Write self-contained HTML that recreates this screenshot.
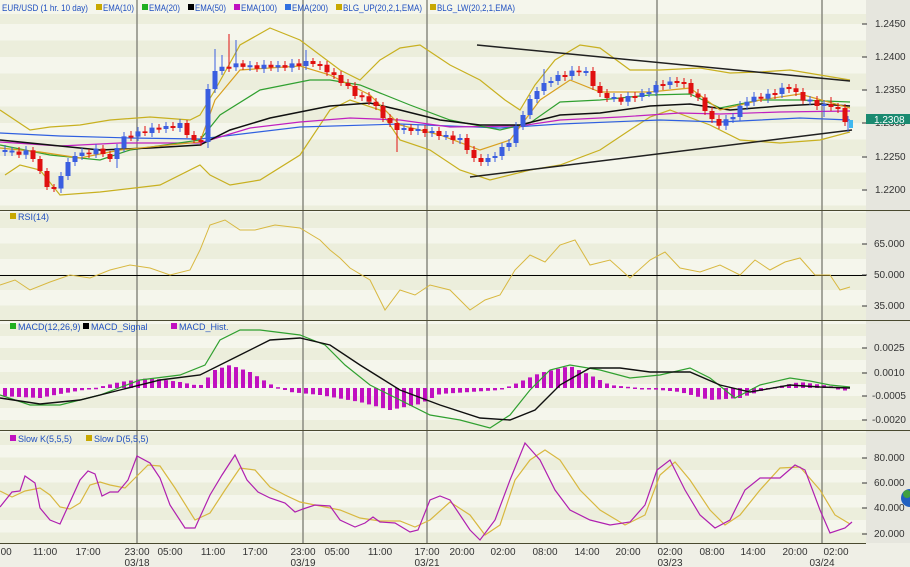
<!DOCTYPE html>
<html><head><meta charset="utf-8"><style>
html,body{margin:0;padding:0;background:#f4f5ea;}
svg{display:block;font-family:"Liberation Sans",sans-serif;}
</style></head><body>
<svg id="s" width="910" height="567" viewBox="0 0 910 567" xmlns="http://www.w3.org/2000/svg">
<rect width="910" height="567" fill="#f5f6ec"/>
<g id="bands"></g>
<rect x="866" y="0" width="44" height="543" fill="#e6e6de"/>
<rect x="0" y="543" width="910" height="24" fill="#efefe6"/>
<g stroke="#8a8a80" stroke-width="1.5">
<line x1="137" y1="0" x2="137" y2="543"/><line x1="303" y1="0" x2="303" y2="543"/>
<line x1="427" y1="0" x2="427" y2="543"/><line x1="657" y1="0" x2="657" y2="543"/>
<line x1="822" y1="0" x2="822" y2="543"/>
</g>
<g stroke="#4a4a30" stroke-width="1">
<line x1="0" y1="210.5" x2="910" y2="210.5"/><line x1="0" y1="320.5" x2="910" y2="320.5"/>
<line x1="0" y1="430.5" x2="910" y2="430.5"/><line x1="0" y1="543.5" x2="866" y2="543.5"/>
</g>
<g fill="none" stroke-width="1.2">
<polyline stroke="#c8b020" points="0,110 15,120 30,130 50,127 80,125 110,120 150,117 190,120 200,115 215,90 240,45 270,28 300,40 320,55 340,70 360,80 380,60 400,48 420,45 450,65 480,80 505,100 520,110 535,85 555,60 580,45 600,48 630,70 660,70 700,68 730,73 760,72 790,70 820,75 850,80"/>
<polyline stroke="#c8b020" points="5,175 20,165 40,170 60,195 100,192 160,185 200,165 210,175 230,185 260,180 300,155 330,110 350,100 380,110 400,140 430,150 460,170 490,180 530,170 560,165 600,150 630,130 650,117 670,110 710,125 740,140 780,143 820,140 850,132"/>
<polyline stroke="#3060e0" points="0,133 60,136 130,138 200,139 300,127 400,124 500,128 560,124 660,120 720,122 800,118 850,120"/>
<polyline stroke="#c020c0" points="0,142 60,146 120,143 200,143 250,128 300,122 350,118 400,120 450,127 520,126 560,120 620,117 680,113 720,114 780,112 850,111"/>
<polyline stroke="#30a030" points="0,145 50,155 100,160 130,150 200,140 220,115 260,90 310,80 330,80 360,85 410,105 450,120 500,130 530,123 560,102 600,100 650,95 690,94 720,108 760,100 800,100 850,102"/>
<polyline stroke="#101010" stroke-width="1.5" points="0,140 50,145 100,150 150,148 200,145 230,130 270,118 300,112 330,106 370,103 400,110 440,120 480,125 520,125 560,115 600,113 650,106 690,104 730,110 780,106 820,104 850,106"/>
<polyline stroke="#d8a020" points="0,148 40,152 80,158 120,150 200,142 215,100 240,70 300,66 330,75 370,95 400,125 440,135 480,150 510,140 540,100 570,80 600,92 650,92 690,88 720,110 760,100 800,94 850,108"/>
<line x1="477" y1="45" x2="850" y2="81" stroke="#202020" stroke-width="1.5"/>
<line x1="470" y1="177" x2="852" y2="130" stroke="#202020" stroke-width="1.5"/>
</g>
<g fill="none">
<path stroke="#e01010" stroke-width="1" d="M19 147V158M33 147V162M40 156V174M47 168V190M54 184V192M89 149V158M103 145V157M110 151V162M131 131V141M145 126V136M159 124V133M173 122V131M187 120V138M194 131V143M201 136V146M229 34V72M243 60V70M257 62V72M271 61V71M285 61V71M299 59V70M313 58V67M320 61V70M327 61V76M334 68V79M341 71V86M348 79V89M355 82V99M362 92V101M369 92V105M376 98V110M383 102V122M390 114V127M397 118V152M411 124V135M425 125V137M439 127V140M453 131V144M467 134V154M474 146V162M481 154V166M565 71V81M579 66V76M593 67V90M600 82V97M607 89V102M621 94V105M635 92V102M663 80V90M677 77V87M684 78V88M691 79V97M698 89V101M705 94V115M712 107V123M719 115V129M761 93V102M775 89V99M789 84V93M796 84V96M803 88V104M817 96V110M831 97V111M838 103V113M845 104V126"/>
<path stroke="#e01010" stroke-width="5" d="M19 151.5V154.7M33 150.3V159M40 159V171M47 171V187M54 187V189M89 152.6V154.2M103 148.6V154M110 154V159M131 135.6V137.6M145 131.4V133M159 127.6V129.6M173 126V128M187 123V135M194 135V140M201 140V142M229 66.7V68.7M243 63.4V66.9M257 65.3V68.8M271 64.8V67.5M285 65.1V67.8M299 63.4V66M313 61V64M320 64V66M327 64.7V72.3M334 72.3V75M341 75V83M348 83V86M355 86V96M362 95.3V97.3M369 96.3V101.7M376 101.7V106M383 106V118M390 118V123M397 123V130M411 128V131M425 129V133M439 131V136M453 135.5V140M467 138V150M474 150V158M481 158V162M565 75V77M579 70.6V72.2M593 71V86M600 86V93M607 93V98M621 97.5V101.8M635 96V98M663 84V86M677 81V83M684 82V84M691 83V93.5M698 93.5V97.5M705 97.5V111M712 111V119M719 119V125.7M761 96.8V98.7M775 93V95M789 87V89M796 88.3V92M803 92V100.6M817 100V106M831 104V107M838 107V109M845 108V122"/>
<path stroke="#3a5ee0" stroke-width="1" d="M5 145V156M12 147V156M26 146V159M61 172V193M68 158V180M75 152V166M82 148V160M96 144V158M117 144V168M124 132V152M138 127V141M152 123V137M166 122V133M180 119V132M208 84V148M215 49V93M222 55V75M236 40V71M250 61V71M264 60V73M278 61V72M292 59V72M306 50V70M404 124V134M418 125V135M432 127V137M446 131V140M460 134V144M488 154V166M495 152V162M502 143V160M509 139V151M516 122V147M523 111V130M530 95V119M537 87V103M544 69V95M551 77V87M558 71V85M572 66V80M586 67V76M614 93V102M628 92V106M642 89V101M649 88V97M656 81V96M670 77V89M726 115V130M733 113V123M740 101V121M747 97V110M754 92V106M768 89V103M782 83V98M810 96V105M824 100V117M848 116V132"/>
<path stroke="#3a5ee0" stroke-width="5" d="M5 150V152M12 150.5V152.5M26 150.3V154.7M61 176V188.5M68 162V176M75 156V162M82 152.6V156M96 148.6V154.2M117 148V159M124 136.4V148M138 131.4V136.6M152 127.6V133M166 126V129M180 123V128M208 89V142M215 71V89M222 66.7V71M236 63.4V67.3M250 65.3V67.3M264 64.8V68.8M278 65.1V67.5M292 63.4V67.8M306 61V66M404 128V130M418 129V131M432 131V133M446 135V137M460 138V140M488 158V162M495 156V158M502 147V156M509 143V147M516 126V143M523 115V126M530 99V115M537 91V99M544 83V91M551 81V83M558 75V81M572 70.6V76M586 71V73M614 97V99M628 96V101.8M642 93V97M649 92V94M656 85V92.5M670 81.5V85M726 119.3V125.7M733 117V119.3M740 105.7V117M747 101.7V105.7M754 96.8V101.7M768 93.8V98.7M782 87.7V94M810 99.5V101.5M824 104V106"/>
<path stroke="#40b8f0" stroke-width="4" d="M851 120V128"/>
</g>
<g fill="none" stroke-width="1">
<line x1="0" y1="275.5" x2="866" y2="275.5" stroke="#000"/>
<polyline stroke="#d8b840" points="0,285 15,280 30,290 50,282 70,275 90,278 110,270 130,265 150,268 170,275 190,270 200,250 210,225 225,220 240,230 255,230 275,225 300,228 320,240 330,250 340,258 350,268 370,280 385,310 400,290 415,295 430,285 450,290 470,310 485,300 500,295 515,270 530,255 545,262 560,245 575,240 590,265 610,260 630,278 650,260 665,252 680,268 700,272 720,265 740,275 755,260 770,270 785,262 800,258 815,275 830,275 840,290 850,287"/>
</g>
<g id="hist" fill="#c010c0"></g>
<g fill="none" stroke-width="1.2">
<polyline stroke="#30a030" points="0,395 30,405 60,405 100,395 140,380 180,375 205,365 220,340 240,330 260,330 300,335 325,345 345,365 370,385 400,400 430,415 460,420 490,428 510,415 530,390 550,370 570,365 600,370 630,378 660,375 690,368 710,378 735,398 760,385 790,378 810,381 830,385 850,387"/>
<polyline stroke="#101010" stroke-width="1.4" points="0,398 40,404 80,400 120,390 160,380 200,375 240,355 270,340 300,338 330,345 360,365 400,390 440,405 480,418 510,420 535,410 560,385 590,368 620,368 650,372 690,372 720,385 750,392 790,385 820,387 850,388"/>
<polyline stroke="#d8b840" points="0,491 12,497 25,491 40,488 50,495 60,507 70,509 80,503 90,485 100,482 110,485 125,488 135,478 148,465 160,466 175,488 195,520 210,513 225,490 240,468 255,470 270,487 285,495 300,502 320,506 340,510 360,518 380,521 400,521 415,527 430,520 450,502 470,515 485,535 500,525 515,480 530,460 545,450 560,460 580,490 600,510 625,525 645,515 660,475 675,462 690,480 710,510 725,525 740,515 760,490 780,468 800,467 820,490 835,515 850,524"/>
<polyline stroke="#b020b0" points="0,507 12,492 20,491 25,476 35,483 40,508 50,520 60,524 70,502 80,480 88,471 95,474 102,496 110,492 118,492 128,480 137,456 150,463 160,478 170,505 185,528 195,528 210,495 222,475 235,455 247,480 258,492 270,498 285,503 295,512 303,509 315,505 330,506 340,520 355,527 365,523 373,517 380,522 395,523 410,532 418,530 430,500 440,496 450,500 470,530 480,540 495,520 510,480 525,443 540,460 555,490 570,510 590,520 610,525 630,522 645,505 657,470 670,460 685,490 700,515 715,528 730,520 745,490 760,478 780,478 795,465 805,470 820,510 830,533 845,528 852,522"/>
</g>
<g font-size="9" fill="#2050c0">
<text x="2" y="11" textLength="86" lengthAdjust="spacingAndGlyphs">EUR/USD (1 hr.  10 day)</text>
<rect x="96" y="4" width="6" height="6" fill="#c8a800"/><text x="103" y="11" textLength="31" lengthAdjust="spacingAndGlyphs">EMA(10)</text>
<rect x="142" y="4" width="6" height="6" fill="#20b020"/><text x="149" y="11" textLength="31" lengthAdjust="spacingAndGlyphs">EMA(20)</text>
<rect x="188" y="4" width="6" height="6" fill="#000"/><text x="195" y="11" textLength="31" lengthAdjust="spacingAndGlyphs">EMA(50)</text>
<rect x="234" y="4" width="6" height="6" fill="#c010c0"/><text x="241" y="11" textLength="36" lengthAdjust="spacingAndGlyphs">EMA(100)</text>
<rect x="285" y="4" width="6" height="6" fill="#3070e0"/><text x="292" y="11" textLength="36" lengthAdjust="spacingAndGlyphs">EMA(200)</text>
<rect x="336" y="4" width="6" height="6" fill="#c8a800"/><text x="343" y="11" textLength="79" lengthAdjust="spacingAndGlyphs">BLG_UP(20,2,1,EMA)</text>
<rect x="430" y="4" width="6" height="6" fill="#c8a800"/><text x="437" y="11" textLength="78" lengthAdjust="spacingAndGlyphs">BLG_LW(20,2,1,EMA)</text>
<rect x="10" y="213" width="6" height="6" fill="#c8a800"/><text x="18" y="220">RSI(14)</text>
<rect x="10" y="323" width="6" height="6" fill="#20b020"/><text x="18" y="330">MACD(12,26,9)</text>
<rect x="83" y="323" width="6" height="6" fill="#000"/><text x="91" y="330">MACD_Signal</text>
<rect x="171" y="323" width="6" height="6" fill="#c010c0"/><text x="179" y="330">MACD_Hist.</text>
<rect x="10" y="435" width="6" height="6" fill="#c010c0"/><text x="18" y="442">Slow K(5,5,5)</text>
<rect x="86" y="435" width="6" height="6" fill="#c8a800"/><text x="94" y="442">Slow D(5,5,5)</text>
</g>
<g font-size="10" fill="#333">
<g stroke="#333"><line x1="862" y1="24" x2="867" y2="24"/><line x1="862" y1="57" x2="867" y2="57"/><line x1="862" y1="90" x2="867" y2="90"/><line x1="862" y1="123" x2="867" y2="123"/><line x1="862" y1="157" x2="867" y2="157"/><line x1="862" y1="190" x2="867" y2="190"/>
<line x1="862" y1="244" x2="867" y2="244"/><line x1="862" y1="275" x2="867" y2="275"/><line x1="862" y1="306" x2="867" y2="306"/>
<line x1="862" y1="348" x2="867" y2="348"/><line x1="862" y1="373" x2="867" y2="373"/><line x1="862" y1="396" x2="867" y2="396"/><line x1="862" y1="420" x2="867" y2="420"/>
<line x1="862" y1="458" x2="867" y2="458"/><line x1="862" y1="483" x2="867" y2="483"/><line x1="862" y1="508" x2="867" y2="508"/><line x1="862" y1="534" x2="867" y2="534"/></g>
<text x="875" y="27">1.2450</text><text x="875" y="60">1.2400</text><text x="875" y="93">1.2350</text><text x="875" y="126">1.2300</text><text x="875" y="160">1.2250</text><text x="875" y="193">1.2200</text>
<text x="874" y="247">65.000</text><text x="874" y="278">50.000</text><text x="874" y="309">35.000</text>
<text x="874" y="351">0.0025</text><text x="874" y="376">0.0010</text><text x="872" y="399">-0.0005</text><text x="872" y="423">-0.0020</text>
<text x="874" y="461">80.000</text><text x="874" y="486">60.000</text><text x="874" y="511">40.000</text><text x="874" y="537">20.000</text>
<rect x="866" y="114" width="44" height="10" fill="#1a8a70"/><text x="874" y="123" fill="#fff">1.2308</text>
</g>
<circle cx="910" cy="498" r="9" fill="#2060c0"/><circle cx="907" cy="494" r="4" fill="#40a040"/>
<g font-size="10" fill="#333" text-anchor="middle">
<text x="2" y="555">5:00</text><text x="45" y="555">11:00</text><text x="88" y="555">17:00</text><text x="137" y="555">23:00</text><text x="170" y="555">05:00</text><text x="213" y="555">11:00</text><text x="255" y="555">17:00</text><text x="303" y="555">23:00</text><text x="337" y="555">05:00</text><text x="380" y="555">11:00</text><text x="427" y="555">17:00</text><text x="462" y="555">20:00</text><text x="503" y="555">02:00</text><text x="545" y="555">08:00</text><text x="587" y="555">14:00</text><text x="628" y="555">20:00</text><text x="670" y="555">02:00</text><text x="712" y="555">08:00</text><text x="753" y="555">14:00</text><text x="795" y="555">20:00</text><text x="836" y="555">02:00</text>
<text x="137" y="566">03/18</text><text x="303" y="566">03/19</text><text x="427" y="566">03/21</text><text x="670" y="566">03/23</text><text x="822" y="566">03/24</text>
</g>
</svg>
<script>
var NS="http://www.w3.org/2000/svg";
function el(p,t,a){var e=document.createElementNS(NS,t);for(var k in a)e.setAttribute(k,a[k]);p.appendChild(e);return e;}
var b=document.getElementById("bands");
var ranges=[[0,210,24,33],[210,320,228,31],[320,430,336,24],[430,543,445,25]];
ranges.forEach(function(r){for(var y=r[2]-r[3]/2,i=0;y<r[1];y+=r[3]/2,i++){var y0=Math.max(y,r[0]+ (r[0]?1:14)),y1=Math.min(y+r[3]/2,r[1]);if(y1>y0&&i%2==0)el(b,"rect",{x:0,y:y0,width:866,height:y1-y0,fill:"#eceedc"});}});
var h=document.getElementById("hist");
var H=[[0,396],[40,398],[60,394],[95,388],[120,382],[150,378],[180,382],[200,386],[215,370],[230,365],[250,372],[270,384],[290,392],[320,395],[360,402],[390,410],[420,404],[440,394],[470,392],[500,390],[515,384],[540,373],[570,366],[590,375],[610,385],[640,388],[680,392],[710,400],[740,398],[770,388],[800,382],[830,386],[850,392]];
function g(x){for(var i=1;i<H.length;i++)if(x<=H[i][0]){var a=H[i-1],q=H[i];return a[1]+(q[1]-a[1])*(x-a[0])/(q[0]-a[0]);}return 390;}
for(var xx=5;xx<=850;xx+=7){var v=g(xx);var y0=Math.min(v,388),y1=Math.max(v,388);el(h,"rect",{x:xx-2,y:y0,width:4,height:Math.max(y1-y0,1.5)});}
</script>
</body></html>
